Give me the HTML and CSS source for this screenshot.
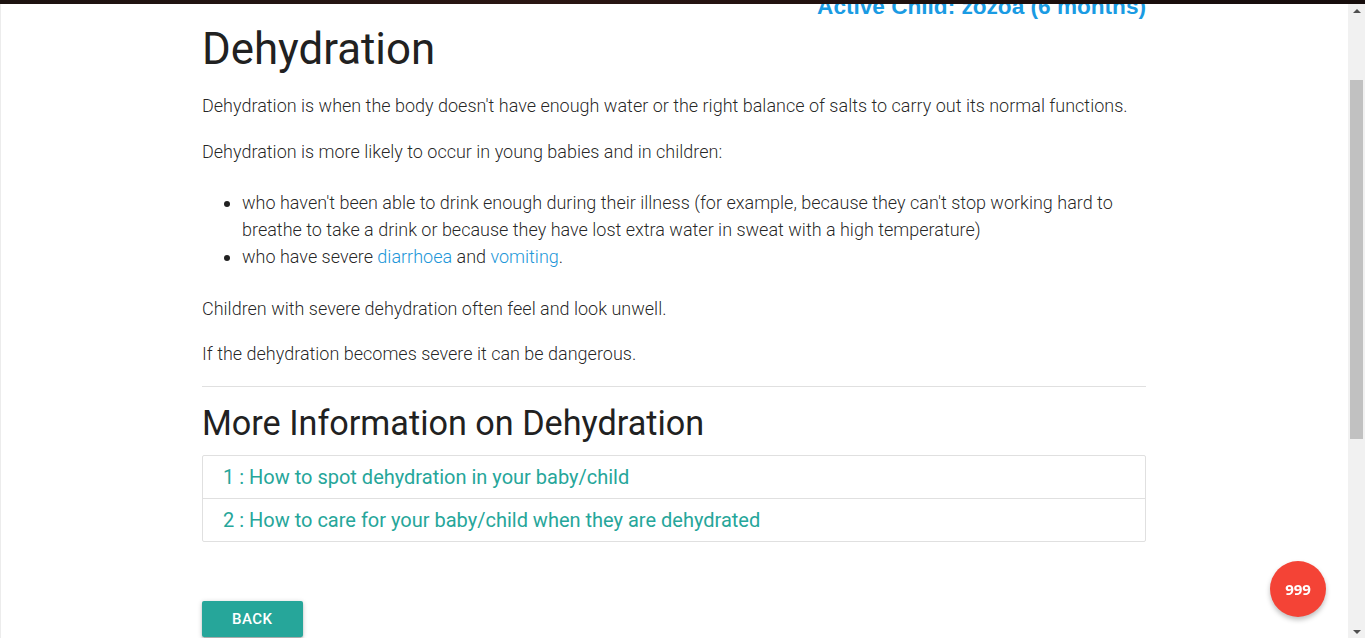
FILE: index.html
```html
<!DOCTYPE html>
<html lang="en">
<head>
<meta charset="utf-8">
<title>Dehydration</title>
<link rel="stylesheet" href="styles.css">
</head>
<body>
<div class="topbar"></div>
<div class="frame">
  <main class="page">
    <div class="container">
      <div class="child-row"><span class="child">Active Child: zozoa (6 months)</span></div>
      <h1 class="title">Dehydration</h1>
      <p>Dehydration is when the body doesn't have enough water or the right balance of salts to carry out its normal functions.</p>
      <p>Dehydration is more likely to occur in young babies and in children:</p>
      <ul class="list">
        <li>who haven't been able to drink enough during their illness (for example, because they can't stop working hard to breathe to take a drink or because they have lost extra water in sweat with a high temperature)</li>
        <li>who have severe <a href="#">diarrhoea</a> and <a href="#">vomiting</a>.</li>
      </ul>
      <p>Children with severe dehydration often feel and look unwell.</p>
      <p class="last">If the dehydration becomes severe it can be dangerous.</p>
      <hr class="divider">
      <h2 class="subtitle">More Information on Dehydration</h2>
      <div class="collection">
        <a class="collection-item" href="#">1 : How to spot dehydration in your baby/child</a>
        <a class="collection-item" href="#">2 : How to care for your baby/child when they are dehydrated</a>
      </div>
      <a class="btn" href="#">Back</a>
    </div>
  </main>
  <div class="scrollbar">
    <div class="arrow up"></div>
    <div class="track"><div class="thumb"></div></div>
    <div class="arrow down"></div>
  </div>
</div>
<div class="badge">999</div>
</body>
</html>
```
FILE: styles.css
```css
html, body {
  margin: 0;
  padding: 0;
  height: 100%;
  overflow: hidden;
  background: #fff;
}
body {
  font-family: Roboto, "Liberation Sans", sans-serif;
  color: rgba(0,0,0,0.87);
}
.topbar {
  position: fixed;
  top: 0;
  left: 0;
  right: 0;
  height: 4px;
  background: linear-gradient(90deg, #1c1210, #2a1613 40%, #1d0f0e 70%, #160d0c);
  z-index: 10;
}
.frame {
  display: flex;
  height: 100%;
}
.page {
  flex: 1;
  overflow: hidden;
  border-left: 1px solid #ececec;
}
.container {
  width: 944px;
  margin: 0 auto;
  position: relative;
  left: -0.5px;
}
.child-row {
  display: flex;
  justify-content: flex-end;
  margin-top: -6px;
  height: 26px;
}
.child {
  font-family: "Liberation Sans", Arial, sans-serif;
  font-weight: 700;
  font-size: 22.6px;
  line-height: 26px;
  color: #1a9be3;
}
.title {
  font-size: 43.8px;
  font-weight: 400;
  line-height: 47px;
  margin: 6px 0 0;
  color: #212121;
}
p {
  font-size: 18px;
  font-weight: 300;
  line-height: 27px;
  margin: 0 0 19px;
}
.title + p {
  margin-top: 19px;
}
.list {
  margin: 24px 0 25px;
  padding-left: 40px;
  font-size: 18px;
  font-weight: 300;
  line-height: 27px;
}
.list li {
  list-style: disc;
}
a {
  text-decoration: none;
}
.list a {
  color: #2196d8;
}
p.last {
  margin-top: -1px;
  margin-bottom: 0;
}
.divider {
  border: 0;
  border-top: 1px solid #e0e0e0;
  margin: 19px 0 0;
}
.subtitle {
  font-size: 34.2px;
  font-weight: 400;
  line-height: 41px;
  margin: 16px 0 11px;
  color: #212121;
}
.collection {
  border: 1px solid #e0e0e0;
  border-radius: 2px;
  display: flex;
  flex-direction: column;
}
.collection-item {
  display: block;
  padding: 10px 20px;
  line-height: 22px;
  font-size: 20px;
  font-weight: 400;
  color: #26a69a;
  border-bottom: 1px solid #e0e0e0;
}
.collection-item:last-child {
  border-bottom: 0;
}
.btn {
  display: inline-block;
  margin-top: 59px;
  height: 36px;
  line-height: 36px;
  padding: 0 30px;
  background: #26a69a;
  color: #fff;
  font-size: 15px;
  font-weight: 500;
  letter-spacing: 0.5px;
  text-transform: uppercase;
  border-radius: 2px;
  box-shadow: 0 2px 2px 0 rgba(0,0,0,0.14), 0 3px 1px -2px rgba(0,0,0,0.12), 0 1px 5px 0 rgba(0,0,0,0.2);
}
.scrollbar {
  width: 17px;
  flex: 0 0 17px;
  background: #f1f1f1;
  display: flex;
  flex-direction: column;
}
.arrow {
  height: 17px;
  display: flex;
  align-items: center;
  justify-content: center;
}
.arrow::before {
  content: "";
  width: 0;
  height: 0;
  border-left: 4px solid transparent;
  border-right: 4px solid transparent;
}
.arrow.up::before {
  border-bottom: 4px solid #505050;
  margin-top: 4px;
}
.arrow.down::before {
  border-top: 4px solid #505050;
  margin-top: 4px;
}
.track {
  flex: 1;
  padding: 0 2px;
}
.thumb {
  margin-top: 63px;
  height: 359px;
  background: #c1c1c1;
}
.badge {
  position: fixed;
  right: 39px;
  bottom: 21px;
  width: 56px;
  height: 56px;
  border-radius: 50%;
  background: #f44336;
  color: #fff;
  font-family: "Open Sans", "DejaVu Sans", sans-serif;
  font-weight: 700;
  font-size: 15px;
  display: flex;
  align-items: center;
  justify-content: center;
  box-shadow: 0 3px 5px rgba(0,0,0,0.25);
}
```
